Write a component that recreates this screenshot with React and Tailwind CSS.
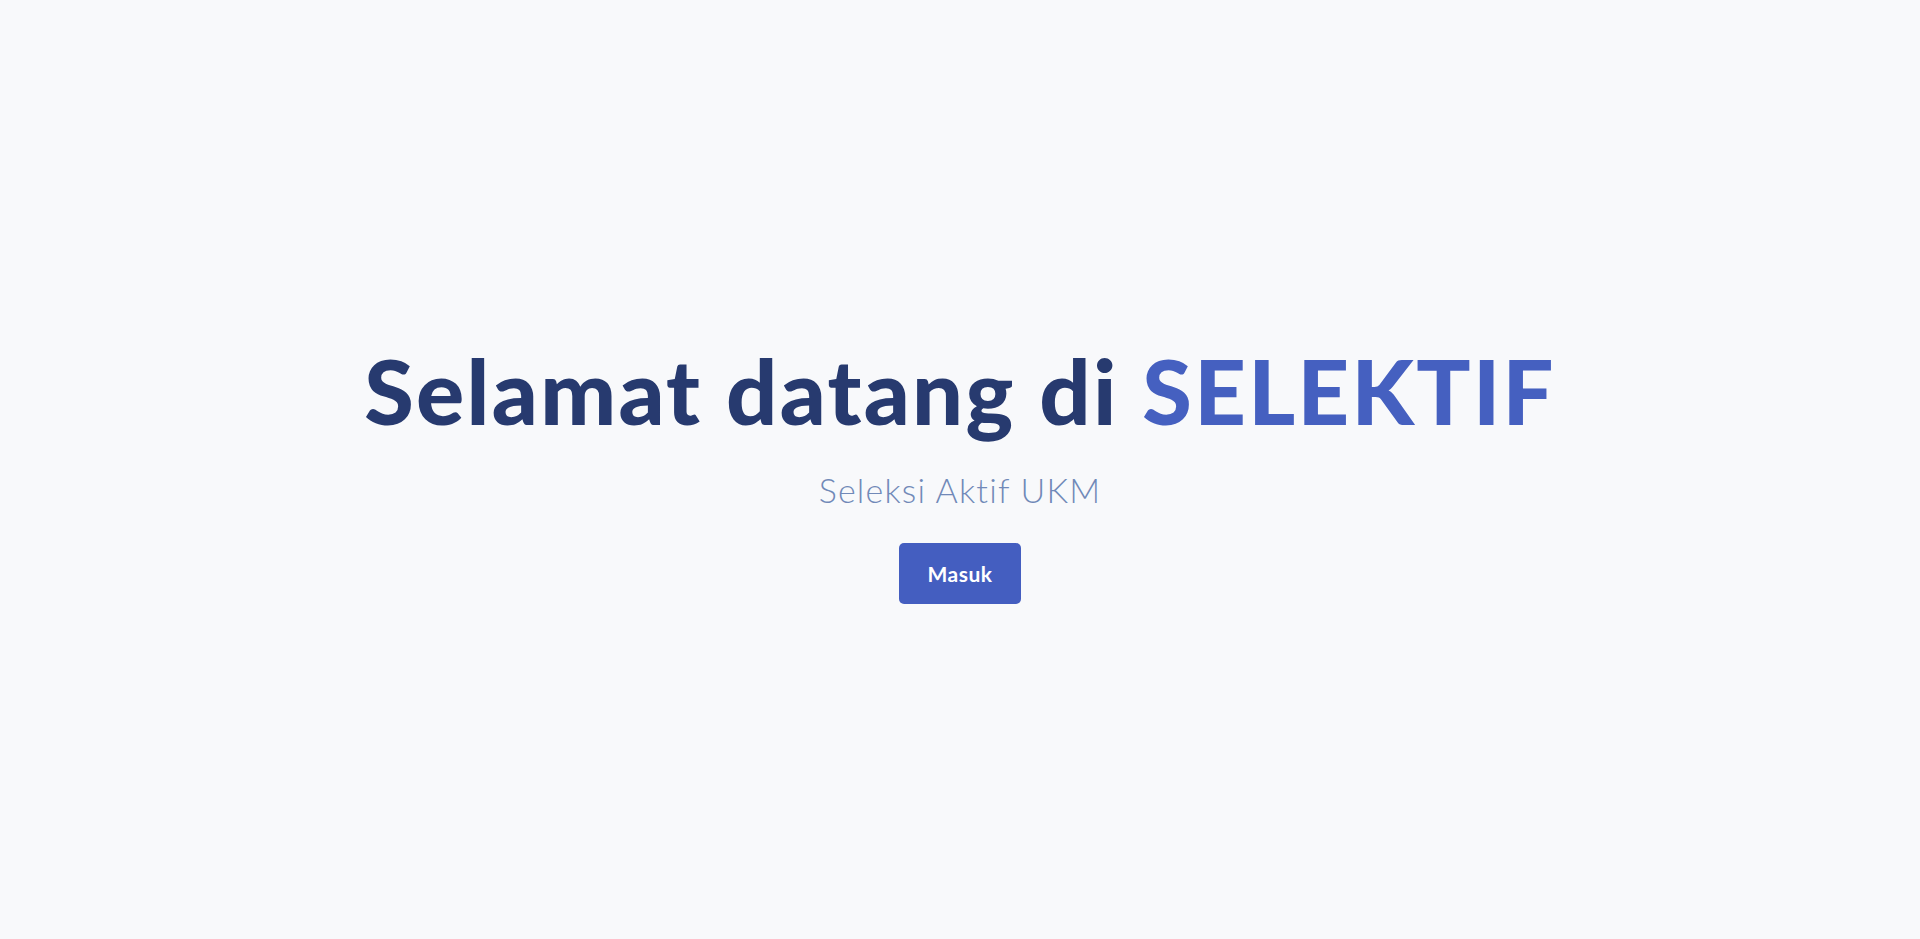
export default function App() {
  return (
    <div className="min-h-screen w-full bg-[#f8f9fb] flex flex-col items-center justify-center pt-[10px]" style={{ fontFamily: 'Lato, "Noto Sans", sans-serif' }}>
      <h1 className="text-[90px] font-black leading-none text-[#273a6f] tracking-[2.3px]">
        Selamat datang di <span className="text-[#4560c0]">SELEKTIF</span>
      </h1>
      <p className="mt-[38px] text-[34px] font-light leading-none text-[#7189b8] tracking-[1.2px]">Seleksi Aktif UKM</p>
      <button className="mt-[36px] h-[61px] w-[122px] rounded-[5px] bg-[#445ec0] text-white text-[21px] font-bold tracking-[0.5px]">Masuk</button>
    </div>
  );
}
